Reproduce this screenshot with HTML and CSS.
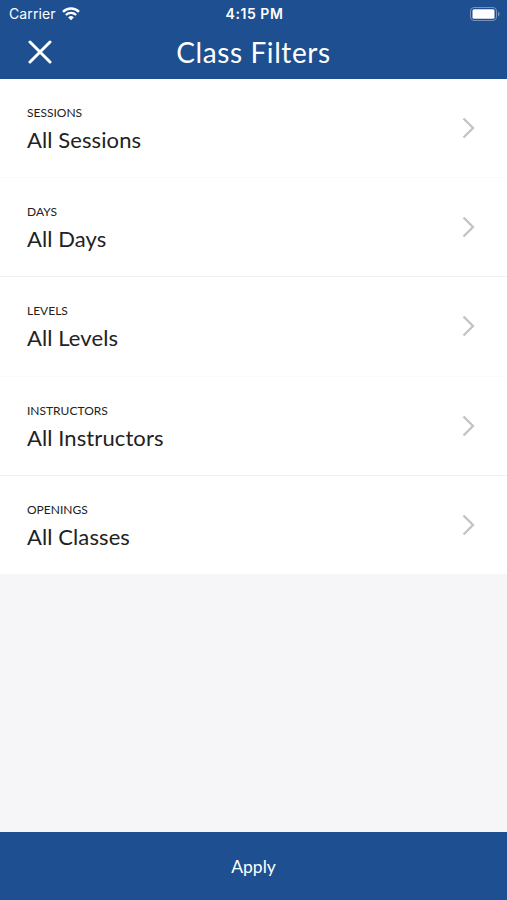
FILE: index.html
```html
<!DOCTYPE html>
<html>

<head>
    <meta charset="utf-8">
    <title>Class Filters</title>
    <link rel="stylesheet" href="styles.css">
</head>

<body>
    <div id="wrap">
        <div class="header">
            <div class="status">
                <div class="carrier">
                    <span>Carrier</span>
                    <svg width="18" height="14" viewBox="0 0 18 14" fill="none" stroke="#fff" stroke-width="2.4">
                        <path d="M1 4.8a11.3 11.3 0 0 1 16 0M3.9 8a7.2 7.2 0 0 1 10.2 0" />
                        <path d="M9 13.2L6.2 10.4a4 4 0 0 1 5.6 0z" fill="#fff" stroke="none" />
                    </svg>
                </div>
                <span class="time">4:15 PM</span>
                <svg class="battery" width="30" height="14" viewBox="0 0 30 14">
                    <rect x=".5" y=".5" width="26" height="13" rx="3.5" fill="none" stroke="#7793bd" />
                    <rect x="2.5" y="2.3" width="22" height="9.4" rx="1.5" fill="#fff" />
                    <path d="M28 4.5q1.6 1 1.6 2.5T28 9.5z" fill="#7793bd" />
                </svg>
            </div>
            <div class="nav">
                <a href="javascript:;" class="close">
                    <svg width="24" height="24" viewBox="0 0 24 24" stroke="#fff" stroke-width="3" stroke-linecap="round">
                        <path d="M2 2l20 20M22 2L2 22" />
                    </svg>
                </a>
                <h1>Class Filters</h1>
            </div>
        </div>
        <ul class="filters">
            <li>
                <div>
                    <p class="label">SESSIONS</p>
                    <p class="value">All Sessions</p>
                </div>
                <svg class="arrow" width="14" height="22" viewBox="0 0 14 22"><path d="M2.5 1.5L12 11l-9.5 9.5" /></svg>
            </li>
            <li>
                <div>
                    <p class="label">DAYS</p>
                    <p class="value">All Days</p>
                </div>
                <svg class="arrow" width="14" height="22" viewBox="0 0 14 22"><path d="M2.5 1.5L12 11l-9.5 9.5" /></svg>
            </li>
            <li>
                <div>
                    <p class="label">LEVELS</p>
                    <p class="value">All Levels</p>
                </div>
                <svg class="arrow" width="14" height="22" viewBox="0 0 14 22"><path d="M2.5 1.5L12 11l-9.5 9.5" /></svg>
            </li>
            <li>
                <div>
                    <p class="label">INSTRUCTORS</p>
                    <p class="value">All Instructors</p>
                </div>
                <svg class="arrow" width="14" height="22" viewBox="0 0 14 22"><path d="M2.5 1.5L12 11l-9.5 9.5" /></svg>
            </li>
            <li>
                <div>
                    <p class="label">OPENINGS</p>
                    <p class="value">All Classes</p>
                </div>
                <svg class="arrow" width="14" height="22" viewBox="0 0 14 22"><path d="M2.5 1.5L12 11l-9.5 9.5" /></svg>
            </li>
        </ul>
        <a href="javascript:;" class="apply">Apply</a>
    </div>
</body>

</html>
```

FILE: styles.css
```css
* {
    margin: 0;
    padding: 0;
    box-sizing: border-box;
}

body {
    font: 400 22px/1.2 Lato, sans-serif;
    color: #222;
}

a {
    color: #fff;
    text-decoration: none;
}

svg {
    display: block;
}

#wrap {
    display: flex;
    flex-direction: column;
    height: 900px;
    background: #f6f6f9;
}

.header {
    height: 79px;
    background: #1d4f91;
    color: #fff;
}

.status {
    display: grid;
    grid-template-columns: 1fr auto 1fr;
    align-items: center;
    height: 27px;
    padding: 0 7px 0 9px;
    font: 400 14px/27px Inter, sans-serif;
}

.carrier {
    display: flex;
    align-items: center;
    gap: 6px;
    letter-spacing: .1px;
}

.time {
    font-weight: 600;
    letter-spacing: .55px;
}

.battery {
    justify-self: end;
}

.nav {
    display: grid;
    grid-template-columns: 80px 1fr 80px;
    align-items: center;
    height: 50px;
}

.close {
    padding-left: 28px;
}

.nav h1 {
    text-align: center;
    font-size: 28px;
    font-weight: 400;
    line-height: 50px;
    letter-spacing: .6px;
}

.filters {
    list-style: none;
    background: #fff;
}

.filters li {
    display: flex;
    justify-content: space-between;
    align-items: center;
    height: 99.2px;
    padding: 0 32px 0 27px;
}

.filters li:nth-child(odd) {
    border-bottom: 1px solid #fbfbfb;
}

.filters li:nth-child(even) {
    border-bottom: 1px solid #f0f0f2;
}

.filters li:last-child {
    height: 98.2px;
    border-bottom: 0;
}

.label {
    font-size: 12px;
    line-height: 16px;
    padding-top: 4px;
}

.value {
    font-size: 22px;
    line-height: 30px;
    margin-top: 4px;
    letter-spacing: .1px;
}

.arrow {
    fill: none;
    stroke: #c4c4c6;
    stroke-width: 2.4;
}

.apply {
    height: 68px;
    margin-top: auto;
    background: #1d4f91;
    font-size: 17.5px;
    line-height: 69px;
    text-align: center;
}
```
